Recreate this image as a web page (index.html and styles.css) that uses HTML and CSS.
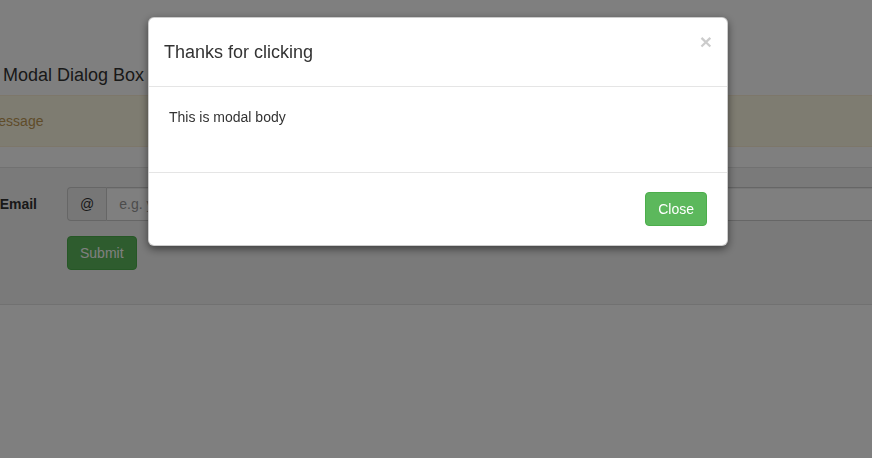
FILE: index.html
```html
<!DOCTYPE html>
<html lang="en">
<head>
  <meta charset="UTF-8" />
  <meta name="viewport" content="width=device-width, initial-scale=1.0"/>
  <title>Modal Dialog Box</title>
  <link rel="stylesheet" href="styles.css">
</head>
<body>

  <div class="page">
    <h4 class="page-title">Modal Dialog Box</h4>

    <div class="alert alert-warning">Alert message</div>

    <div class="well">
      <form class="form-horizontal">
        <div class="form-group">
          <label class="control-label" for="email">Email</label>
          <div class="input-group">
            <span class="input-group-addon">@</span>
            <input type="text" id="email" class="form-control" placeholder="e.g. you@example.com">
          </div>
        </div>
        <div class="form-group">
          <span></span>
          <div>
            <button type="button" class="btn btn-success">Submit</button>
          </div>
        </div>
      </form>
    </div>
  </div>

  <div class="modal-backdrop"></div>

  <div class="modal">
    <div class="modal-dialog">
      <div class="modal-content">
        <div class="modal-header">
          <button type="button" class="close">&times;</button>
          <h4 class="modal-title">Thanks for clicking</h4>
        </div>
        <div class="modal-body">
          <p>This is modal body</p>
        </div>
        <div class="modal-footer">
          <button type="button" class="btn btn-success">Close</button>
        </div>
      </div>
    </div>
  </div>

</body>
</html>
```

FILE: styles.css
```css
* {
  box-sizing: border-box;
}

body {
  font-family: "Liberation Sans", Arial, sans-serif;
  font-size: 14px;
  line-height: 20px;
  color: #333;
  background: #fff;
  margin: 0;
  padding: 0;
  overflow: hidden;
}

.page {
  margin: 0 -60px 0 -62px;
  padding-top: 55px;
}

.page-title {
  font-size: 18px;
  font-weight: normal;
  line-height: 20px;
  margin: 10px 0 10px 65px;
}

.alert {
  padding: 15px;
  margin-bottom: 20px;
  border: 1px solid #fbeed5;
  border-radius: 4px;
}

.alert-warning {
  background-color: #fcf8e3;
  color: #c09853;
}

.well {
  padding: 19px;
  background-color: #f5f5f5;
  border: 1px solid #e3e3e3;
  border-radius: 4px;
}

.form-group {
  display: grid;
  grid-template-columns: 79px 1fr;
  column-gap: 30px;
  margin-bottom: 15px;
}

.control-label {
  text-align: right;
  font-weight: bold;
  padding-top: 7px;
}

.input-group {
  display: flex;
}

.input-group-addon {
  padding: 6px 12px;
  background-color: #eee;
  border: 1px solid #ccc;
  border-right: none;
  border-radius: 4px 0 0 4px;
  font-size: 14px;
  font-weight: normal;
  line-height: 20px;
  text-align: center;
}

.form-control {
  flex: 1;
  height: 34px;
  padding: 6px 12px;
  font-family: inherit;
  font-size: 14px;
  color: #555;
  background: #fff;
  border: 1px solid #ccc;
  border-radius: 0 4px 4px 0;
  box-shadow: inset 0 1px 1px rgba(0,0,0,0.075);
}

.form-control::placeholder {
  color: #999;
}

.btn {
  display: inline-block;
  padding: 6px 12px;
  font-family: inherit;
  font-size: 14px;
  line-height: 20px;
  border: 1px solid transparent;
  border-radius: 4px;
  cursor: pointer;
}

.btn-success {
  color: #fff;
  background-color: #5cb85c;
  border-color: #4cae4c;
}

.modal-backdrop {
  position: fixed;
  top: 0;
  right: 0;
  bottom: 0;
  left: 0;
  background: rgba(0,0,0,0.5);
}

.modal {
  position: fixed;
  top: 0;
  right: 0;
  bottom: 0;
  left: 0;
}

.modal-dialog {
  width: 580px;
  margin: 17px 0 0 calc(50% - 288px);
}

.modal-content {
  background: #fff;
  border: 1px solid rgba(0,0,0,0.2);
  border-radius: 6px;
  box-shadow: 0 3px 9px rgba(0,0,0,0.5);
}

.modal-header {
  padding: 15px;
  border-bottom: 1px solid #e5e5e5;
}

.modal-title {
  font-size: 18px;
  font-weight: normal;
  line-height: 18px;
  margin: 10px 0;
}

.close {
  float: right;
  margin-top: -2px;
  padding: 0;
  background: transparent;
  border: 0;
  font-family: inherit;
  font-size: 21px;
  font-weight: bold;
  line-height: 1;
  color: #000;
  opacity: 0.2;
  cursor: pointer;
}

.modal-body {
  padding: 20px;
}

.modal-body p {
  margin: 0 0 10px;
}

.modal-footer {
  margin-top: 15px;
  padding: 19px 20px 19px;
  text-align: right;
  border-top: 1px solid #e5e5e5;
}
```
